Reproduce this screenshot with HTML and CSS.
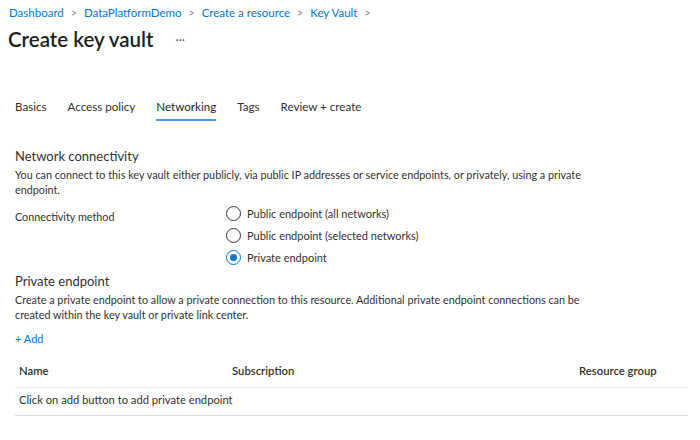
FILE: index.html
```html
<!DOCTYPE html>
<html>
<head>
<meta charset="utf-8">
<link rel="stylesheet" href="styles.css">
</head>
<body>
<div class="page">
  <nav class="crumbs">
    <a>Dashboard</a><span class="sep">&gt;</span>
    <a>DataPlatformDemo</a><span class="sep">&gt;</span>
    <a>Create a resource</a><span class="sep">&gt;</span>
    <a>Key Vault</a><span class="sep">&gt;</span>
  </nav>
  <div class="title-row">
    <h1 class="title">Create key vault</h1>
    <span class="more">···</span>
  </div>
  <div class="tabs">
    <span class="tab">Basics</span>
    <span class="tab">Access policy</span>
    <span class="tab active">Networking</span>
    <span class="tab">Tags</span>
    <span class="tab">Review + create</span>
  </div>
  <section class="section">
    <h2 class="heading">Network connectivity</h2>
    <p class="desc">You can connect to this key vault either publicly, via public IP addresses or service endpoints, or privately, using a private endpoint.</p>
    <div class="field">
      <div class="label">Connectivity method</div>
      <div class="radios">
        <div class="radio"><span class="circle"></span>Public endpoint (all networks)</div>
        <div class="radio"><span class="circle"></span>Public endpoint (selected networks)</div>
        <div class="radio"><span class="circle checked"></span>Private endpoint</div>
      </div>
    </div>
  </section>
  <section class="section pe">
    <h2 class="heading">Private endpoint</h2>
    <p class="desc">Create a private endpoint to allow a private connection to this resource. Additional private endpoint connections can be created within the key vault or private link center.</p>
    <a class="add">+ Add</a>
    <div class="table">
      <div class="thead">
        <span class="c1">Name</span>
        <span class="c2">Subscription</span>
        <span class="c3">Resource group</span>
      </div>
      <div class="trow">Click on add button to add private endpoint</div>
    </div>
  </section>
</div>
</body>
</html>
```
FILE: styles.css
```css
html, body {
  margin: 0;
  padding: 0;
  background: #ffffff;
}
body {
  font-family: Lato, "Open Sans", sans-serif;
  color: #323130;
  font-size: 11px;
}
.page {
  padding: 4px 12px 0 15px;
}
.crumbs {
  display: flex;
  align-items: center;
  gap: 7px;
  margin-left: -6px;
  font-size: 11.5px;
  line-height: 18px;
  height: 18px;
}
.crumbs a {
  color: #0078d4;
}
.crumbs .sep {
  color: #8a8886;
  font-size: 10.5px;
}
.title-row {
  display: flex;
  align-items: center;
  margin-left: -7px;
  margin-top: 2px;
  height: 30px;
}
.title {
  margin: 0;
  font-size: 20.5px;
  font-weight: 600;
  color: #201f1e;
}
.more {
  margin-left: 22px;
  font-size: 12px;
  color: #605e5c;
}
.tabs {
  display: flex;
  gap: 21px;
  margin-top: 40px;
  height: 28px;
}
.tab {
  font-size: 11.6px;
  line-height: 25px;
  height: 25px;
  border-bottom: 2px solid transparent;
}
.tab.active {
  border-bottom-color: #4a9ee8;
  color: #201f1e;
}
.section {
  margin-top: 25px;
}
.heading {
  margin: 0;
  font-size: 13px;
  font-weight: 400;
  line-height: 18px;
}
.desc {
  margin: 2px 0 0;
  font-size: 10.8px;
  line-height: 15px;
  max-width: 600px;
}
.field {
  display: flex;
  margin-top: 9px;
}
.label {
  width: 211px;
  font-size: 10.8px;
  line-height: 15px;
  padding-top: 3px;
}
.radios {
  display: flex;
  flex-direction: column;
  gap: 7px;
}
.radio {
  display: flex;
  align-items: center;
  gap: 6px;
  font-size: 11px;
  line-height: 15px;
}
.circle {
  width: 13px;
  height: 13px;
  border: 1px solid #323130;
  border-radius: 50%;
  box-sizing: content-box;
  position: relative;
}
.circle.checked {
  border-color: #0078d4;
}
.circle.checked::after {
  content: "";
  position: absolute;
  left: 3px;
  top: 3px;
  width: 7px;
  height: 7px;
  border-radius: 50%;
  background: #0078d4;
}
.pe {
  margin-top: 7px;
}
.add {
  display: block;
  color: #0078d4;
  margin-top: 9px;
  line-height: 15px;
  font-size: 11px;
}
.table {
  margin-top: 17px;
}
.thead {
  display: flex;
  font-size: 11.3px;
  font-weight: 600;
  line-height: 16px;
  padding: 0 0 8px 4px;
  border-bottom: 1px solid #edebe9;
}
.thead .c1 { width: 213px; }
.thead .c2 { width: 347px; }
.trow {
  padding: 4px 0 7px 4px;
  line-height: 16px;
  font-size: 11.2px;
  border-bottom: 1px solid #dcdcdc;
}
```
